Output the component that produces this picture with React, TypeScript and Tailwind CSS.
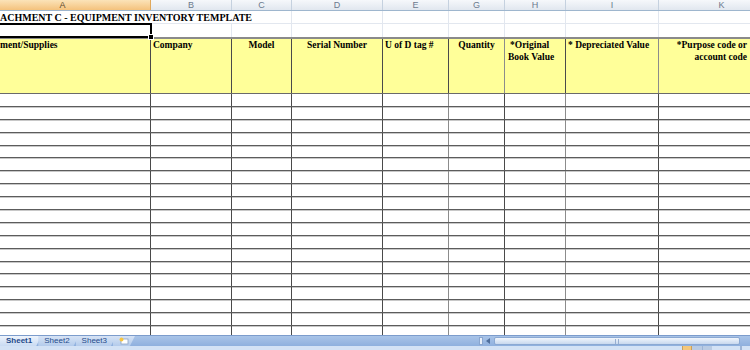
const cols = [
  { l: 'A', w: 'w-[176px]' },
  { l: 'B', w: 'w-[81px]' },
  { l: 'C', w: 'w-[60px]' },
  { l: 'D', w: 'w-[91px]' },
  { l: 'E', w: 'w-[66px]' },
  { l: 'G', w: 'w-[56px]' },
  { l: 'H', w: 'w-[61px]' },
  { l: 'I', w: 'w-[93px]' },
  { l: 'K', w: 'w-[126px]' },
];

const serif = { fontFamily: '"Liberation Serif", "Times New Roman", serif' };

function ColHeaders() {
  return (
    <div className="flex h-[11px] ml-[-25px] border-b border-[#9eb6ce]" style={{ fontFamily: '"Liberation Sans", Arial, sans-serif' }}>
      {cols.map((c, i) => (
        <div
          key={c.l}
          className={`${c.w} shrink-0 flex items-center justify-center text-[9px] leading-none border-r ${
            i === 0
              ? 'bg-gradient-to-b from-[#fbe3b8] to-[#f4c27c] text-[#5b4a2e] border-[#e0a85c]'
              : 'bg-gradient-to-b from-[#f6f8fb] to-[#e1e7ef] text-[#6b7a8e] border-[#c5d1df]'
          }`}
        >
          {c.l}
        </div>
      ))}
    </div>
  );
}

function TitleRows() {
  return (
    <div className="ml-[-25px]">
      <div className="flex h-[13px] border-b border-[#e2e7ef]">
        {cols.map((c, i) => (
          <div
            key={c.l}
            className={`${c.w} shrink-0 ${i > 1 ? 'border-r border-[#e2e7ef]' : ''} ${i === 0 ? 'relative' : ''}`}
          >
            {i === 0 && (
              <span
                className="absolute left-[25px] top-0 whitespace-nowrap font-bold text-[10px] leading-[13px] text-black"
                style={serif}
              >
                ACHMENT C - EQUIPMENT INVENTORY TEMPLATE
              </span>
            )}
          </div>
        ))}
      </div>
      <div className="flex h-[13px] relative">
        {cols.map((c) => (
          <div key={c.l} className={`${c.w} shrink-0 border-r border-[#e2e7ef]`} />
        ))}
        {/* selected cell A2 */}
        <div className="absolute left-[0px] top-[-1px] w-[177px] h-[15px] border-2 border-black pointer-events-none" />
        <div className="absolute left-[173px] top-[10px] w-[6px] h-[6px] bg-black border border-white" />
      </div>
    </div>
  );
}

function HeaderRow() {
  const cell = 'shrink-0 h-full border-r border-[#4a4a4a] pt-[0px] text-[9.5px] leading-[12px] font-bold text-black';
  return (
    <div className="flex h-[57px] ml-[-25px] bg-[#ffff99] border-t-2 border-b border-t-[#8a8a8a] border-b-[#6a6a6a]" style={serif}>
      <div className={`${cols[0].w} ${cell} pl-[25px] whitespace-nowrap`}>ment/Supplies</div>
      <div className={`${cols[1].w} ${cell} pl-[2px]`}>Company</div>
      <div className={`${cols[2].w} ${cell} text-center`}>Model</div>
      <div className={`${cols[3].w} ${cell} text-center`}>Serial Number</div>
      <div className={`${cols[4].w} ${cell} pl-[2px]`}>U of D tag #</div>
      <div className={`${cols[5].w} ${cell} text-center border-[#8c8c8c]`}>Quantity</div>
      <div className={`${cols[6].w} ${cell}`}>
        <div className="pl-[5px]">*Original</div>
        <div className="pl-[3px]">Book Value</div>
      </div>
      <div className={`${cols[7].w} ${cell} pl-[2px] border-[#8c8c8c]`}>* Depreciated Value</div>
      <div className={`${cols[8].w} ${cell} text-right pr-[37px]`}>
        <div className="whitespace-nowrap">*Purpose code or</div>
        <div className="whitespace-nowrap">account code</div>
      </div>
    </div>
  );
}

function DataRows() {
  const rows = Array.from({ length: 19 });
  return (
    <div className="h-[241px] overflow-hidden ml-[-25px]">
      {rows.map((_, r) => (
        <div key={r} className="flex h-[12.9px] border-b border-[#5c5c5c] shadow-[0_1px_0_#c8c8c8]">
          {cols.map((c, i) => (
            <div
              key={c.l}
              className={`${c.w} shrink-0 border-r ${i === 4 || i === 6 ? 'border-[#8c8c8c]' : 'border-[#4a4a4a]'}`}
            />
          ))}
        </div>
      ))}
    </div>
  );
}

function Tab({ label, active }: { label: string; active?: boolean }) {
  return (
    <div
      className={`relative h-full flex items-center pl-[6px] pr-[9px] text-[8px] text-[#1f4a8a] ${
        active ? 'bg-gradient-to-b from-[#eef4fc] to-[#c9dbf2] font-bold' : 'bg-gradient-to-b from-[#d6e3f5] to-[#b3cbeb]'
      }`}
      style={{ clipPath: 'polygon(0 0, 100% 0, calc(100% - 5px) 100%, 0 100%)' }}
    >
      {label}
    </div>
  );
}

function TabBar() {
  return (
    <div className="h-[11px] flex items-stretch bg-gradient-to-b from-[#a9c4e8] to-[#8fb0de] border-t border-[#7c9ccc]" style={{ fontFamily: '"Liberation Sans", Arial, sans-serif' }}>
      <div className="flex items-stretch">
        <Tab label="Sheet1" active />
        <div className="ml-[-3px]"><Tab label="Sheet2" /></div>
        <div className="ml-[-3px]"><Tab label="Sheet3" /></div>
        <div
          className="ml-[-3px] w-[22px] h-full flex items-center justify-center bg-gradient-to-b from-[#d6e3f5] to-[#b3cbeb]"
          style={{ clipPath: 'polygon(0 0, 100% 0, calc(100% - 5px) 100%, 0 100%)' }}
        >
          <svg width="10" height="8" viewBox="0 0 10 8">
            <rect x="2" y="2" width="7" height="5" fill="#fff" stroke="#8aa2c4" strokeWidth="0.8" />
            <circle cx="2.5" cy="2.5" r="2" fill="#f5c542" />
          </svg>
        </div>
      </div>
      <div className="flex-1" />
      <div className="w-[4px] my-[1px] bg-[#e8eff9] border border-[#8aa6cf]" />
      <div className="w-[11px] flex items-center justify-center">
        <svg width="5" height="6" viewBox="0 0 5 6">
          <path d="M4 0 L0 3 L4 6 Z" fill="#4f6f9d" />
        </svg>
      </div>
      <div className="w-[246px] my-[1px] rounded-[2px] border border-[#8ba9d3] bg-gradient-to-b from-[#f1f6fc] to-[#c8d8ee] flex items-center justify-center">
        <div className="w-[4px] h-[5px] border-x border-[#97aed0]" />
      </div>
      <div className="w-[10px]" />
    </div>
  );
}

function StatusBar() {
  return (
    <div className="h-[4px] flex bg-[#d3e2f5]">
      <div className="flex-1" />
      <div className="w-[10px] h-full bg-[#f4c77a] border-x border-[#c9a05a]" />
      <div className="w-[10px] h-full bg-[#b9cbe3]" />
      <div className="w-[10px] h-full bg-[#b9cbe3] border-l border-[#9db4d6]" />
      <div className="w-[28px]" />
      <div className="w-[2px] h-full bg-[#9db4d6]" />
      <div className="w-[8px]" />
    </div>
  );
}

export default function App() {
  return (
    <div className="w-[750px] h-[350px] overflow-hidden bg-white flex flex-col">
      <ColHeaders />
      <TitleRows />
      <HeaderRow />
      <DataRows />
      <TabBar />
      <StatusBar />
    </div>
  );
}
